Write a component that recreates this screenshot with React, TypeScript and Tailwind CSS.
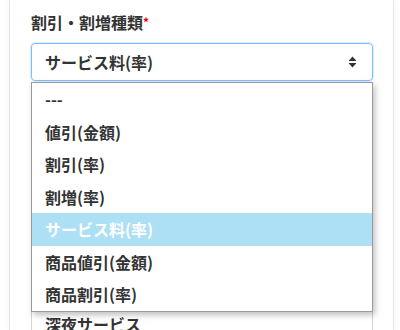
import React from 'react';

const options = ['---', '値引(金額)', '割引(率)', '割増(率)', 'サービス料(率)', '商品値引(金額)', '商品割引(率)'];

const SortIcon = () => (
  <svg width="9" height="12" viewBox="0 0 9 12" className="text-[#333]">
    <path d="M4.5 0.5 L8.5 5 L0.5 5 Z" fill="currentColor" />
    <path d="M4.5 11.5 L8.5 7 L0.5 7 Z" fill="currentColor" />
  </svg>
);

export default function App() {
  const selected = 'サービス料(率)';
  return (
    <div
      className="w-[400px] h-[330px] overflow-hidden bg-white text-[#333]"
      style={{ fontFamily: '"Noto Sans CJK JP", "Noto Sans", sans-serif' }}
    >
      <div className="ml-[9px] w-[385px] h-full border-x border-[#e6e6e6] shadow-[0_0_6px_rgba(0,0,0,0.06)] pl-[21px] pr-[20px] pt-[10px]">
        <div className="relative">
          <label className="block text-[16px] leading-[24px] font-bold mb-[9px]">
            割引・割増種類<span className="text-[#e00] text-[12px] align-top">*</span>
          </label>

          <div className="h-[38px] flex items-center justify-between pl-[13px] pr-[15px] border border-[#80bdff] rounded-[4px] shadow-[0_0_0_1px_rgba(128,189,255,0.25)] text-[16px] font-bold">
            <span>{selected}</span>
            <SortIcon />
          </div>

          <div className="absolute left-0 right-0 top-[72px] z-10 bg-white border border-[#9a9a9a] shadow-[2px_3px_6px_rgba(0,0,0,0.25)]">
            {options.map((o) => (
              <div
                key={o}
                className={`h-[32.5px] flex items-center pl-[13px] text-[16px] font-bold ${
                  o === selected ? 'bg-[#ade0f5] text-white' : 'text-[#333]'
                }`}
              >
                {o}
              </div>
            ))}
          </div>

          <div className="mt-[224px] h-[38px] flex items-center pl-[13px] border border-[#ced4da] rounded-[4px] text-[16px] font-bold">
            深夜サービス
          </div>
        </div>
      </div>
    </div>
  );
}
